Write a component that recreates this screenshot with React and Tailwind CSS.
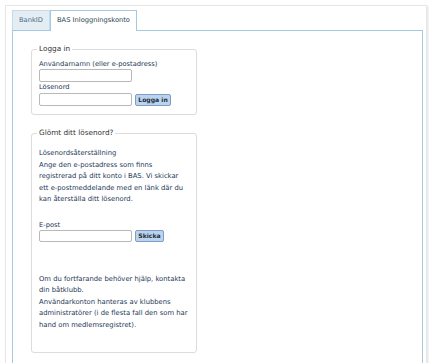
import React from "react";

export default function App() {
  return (
    <div className="w-[432px] h-[363px] bg-white overflow-hidden font-['DejaVu_Sans',sans-serif]">
      <div className="ml-[5px] mr-[5px] mt-[5px] h-[400px] border border-[#e6e6e6] shadow-[1px_1px_2px_rgba(0,0,0,0.12)] pl-[6px] pr-[3px] pt-[4px]">
        {/* tabs */}
        <div className="flex items-end h-[20px]">
          <div className="h-[20px] w-[38px] flex items-center justify-center bg-[#e4edf4] border border-b-0 border-[#c5dbec] text-[6.7px] text-[#4a6984]">
            BankID
          </div>
          <div className="relative z-10 h-[21px] -mb-[1px] w-[87px] flex items-center justify-center bg-white border border-b-0 border-[#a6c9e2] text-[6.7px] text-[#2c3e50] pb-[1px]">
            BAS Inloggningskonto
          </div>
        </div>
        {/* panel */}
        <div className="h-[360px] border border-[#a6c9e2] pl-[18px] pt-[13px]">
          <fieldset className="w-[166px] border border-[#dcdcdc] rounded-[3px] px-[7px] pt-[5px] pb-[8px]">
            <legend className="-ml-[2px] px-[2px] text-[7.3px] leading-[10px] text-[#333]">Logga in</legend>
            <div className="text-[6.7px] leading-[10px] text-[#1c3856]">Användarnamn (eller e-postadress)</div>
            <div className="h-[13px] w-[93px] border border-[#b9b9b9] rounded-[2px] bg-white"></div>
            <div className="text-[6.7px] leading-[10px] text-[#1c3856]">Lösenord</div>
            <div className="mt-[1px] flex items-center gap-[3px]">
              <div className="h-[13px] w-[93px] border border-[#b9b9b9] rounded-[2px] bg-white"></div>
              <div className="h-[12px] w-[36px] flex items-center justify-center border border-[#7d9cc6] rounded-[2px] bg-[#bcd3ee] text-[6.1px] font-bold text-[#1c2a3a] whitespace-nowrap">
                Logga in
              </div>
            </div>
          </fieldset>

          <fieldset className="mt-[13px] w-[166px] border border-[#dcdcdc] rounded-[3px] px-[7px] pt-[10px] pb-[21px]">
            <legend className="-ml-[2px] px-[2px] text-[7.3px] leading-[10px] text-[#333]">Glömt ditt lösenord?</legend>
            <div className="text-[6.8px] leading-[11.5px] text-[#1c3856] whitespace-nowrap">
              Lösenordsåterställning
              <br />
              Ange den e-postadress som finns
              <br />
              registrerad på ditt konto i BAS. Vi skickar
              <br />
              ett e-postmeddelande med en länk där du
              <br />
              kan återställa ditt lösenord.
            </div>
            <div className="mt-[14px] text-[6.7px] leading-[10px] text-[#1c3856]">E-post</div>
            <div className="flex items-center gap-[3px]">
              <div className="h-[12px] w-[93px] border border-[#b9b9b9] rounded-[2px] bg-white"></div>
              <div className="h-[12px] w-[29px] flex items-center justify-center border border-[#7d9cc6] rounded-[2px] bg-[#bcd3ee] text-[6.1px] font-bold text-[#1c2a3a] whitespace-nowrap">
                Skicka
              </div>
            </div>
            <div className="mt-[32px] text-[6.8px] leading-[11.5px] text-[#1c3856] whitespace-nowrap">
              Om du fortfarande behöver hjälp, kontakta
              <br />
              din båtklubb.
              <br />
              Användarkonton hanteras av klubbens
              <br />
              administratörer (i de flesta fall den som har
              <br />
              hand om medlemsregistret).
            </div>
          </fieldset>
        </div>
      </div>
    </div>
  );
}
